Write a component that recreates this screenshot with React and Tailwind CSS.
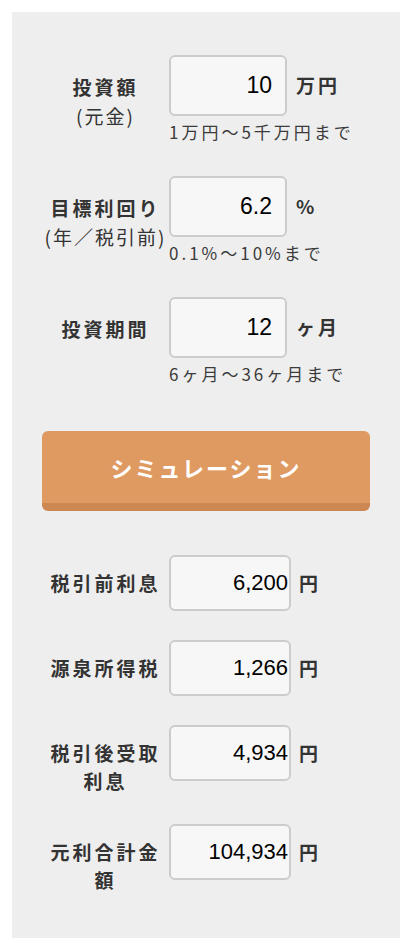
import React from "react";

const jp = "font-['Noto_Sans_CJK_JP','Noto_Sans',sans-serif]";
const num = "font-['Liberation_Sans',Arial,sans-serif]";

// input rows at the top of the calculator
const inputRows = [
  { label: "投資額", sub: "(元金)", value: "10", unit: "万円", hint: "1万円〜5千万円まで" },
  { label: "目標利回り", sub: "(年／税引前)", value: "6.2", unit: "%", hint: "0.1%〜10%まで" },
  { label: "投資期間", sub: null, value: "12", unit: "ヶ月", hint: "6ヶ月〜36ヶ月まで" },
];

// result rows
const resultRows = [
  { lines: ["税引前利息"], value: "6,200" },
  { lines: ["源泉所得税"], value: "1,266" },
  { lines: ["税引後受取", "利息"], value: "4,934" },
  { lines: ["元利合計金", "額"], value: "104,934" },
];

const InputRow = ({ row }) => (
  <div className="flex items-start">
    <div className={`w-[127px] shrink-0 mt-[17px] text-center text-[#333] ${jp}`}>
      <div className="text-[19px] leading-[29px] font-bold tracking-[3px]">{row.label}</div>
      {row.sub && <div className="text-[19px] leading-[29px] tracking-[2px]">{row.sub}</div>}
    </div>
    <div className="flex flex-col">
      <div className="flex items-center">
        <input
          readOnly
          value={row.value}
          className={`w-[118px] h-[61px] bg-[#f7f7f7] border-2 border-[#cccccc] rounded-[6px] text-right pr-[13px] text-[23px] text-black outline-none ${num}`}
        />
        <span className={`ml-[9px] text-[19px] font-bold tracking-[3px] text-[#333] ${jp}`}>{row.unit}</span>
      </div>
      <div className={`mt-[6px] h-[20px] text-[17px] leading-[20px] tracking-[3px] text-[#3b3b3b] ${jp}`}>{row.hint}</div>
    </div>
  </div>
);

const ResultRow = ({ row }) => (
  <div className="flex items-start">
    <div className={`w-[127px] shrink-0 mt-[14px] text-center text-[#333] text-[19px] leading-[28px] font-bold tracking-[3px] ${jp}`}>
      {row.lines.map((l) => (
        <div key={l}>{l}</div>
      ))}
    </div>
    <div className="flex items-center">
      <input
        readOnly
        value={row.value}
        className={`w-[122px] h-[56px] bg-[#f7f7f7] border-2 border-[#cccccc] rounded-[6px] text-right pr-[1px] text-[22px] text-black outline-none ${num}`}
      />
      <span className={`ml-[8px] text-[19px] font-bold text-[#333] ${jp}`}>円</span>
    </div>
  </div>
);

const App = () => {
  return (
    <div className="bg-white min-h-[946px] pt-[12px] px-[12px]">
      <div className="bg-[#eeeeee] pt-[43px] pb-[44px] px-[30px]">
        <div className="flex flex-col gap-[34px]">
          {inputRows.map((row) => (
            <InputRow key={row.label} row={row} />
          ))}
        </div>

        <button
          className={`mt-[47px] w-[328px] h-[80px] bg-[#df9a62] border-b-[8px] border-[#cd8752] rounded-[6px] text-white text-[22px] font-bold tracking-[2px] ${jp}`}
        >
          シミュレーション
        </button>

        <div className="mt-[44px] flex flex-col gap-[29px]">
          {resultRows.map((row) => (
            <ResultRow key={row.value} row={row} />
          ))}
        </div>
      </div>
    </div>
  );
};

export default App;
